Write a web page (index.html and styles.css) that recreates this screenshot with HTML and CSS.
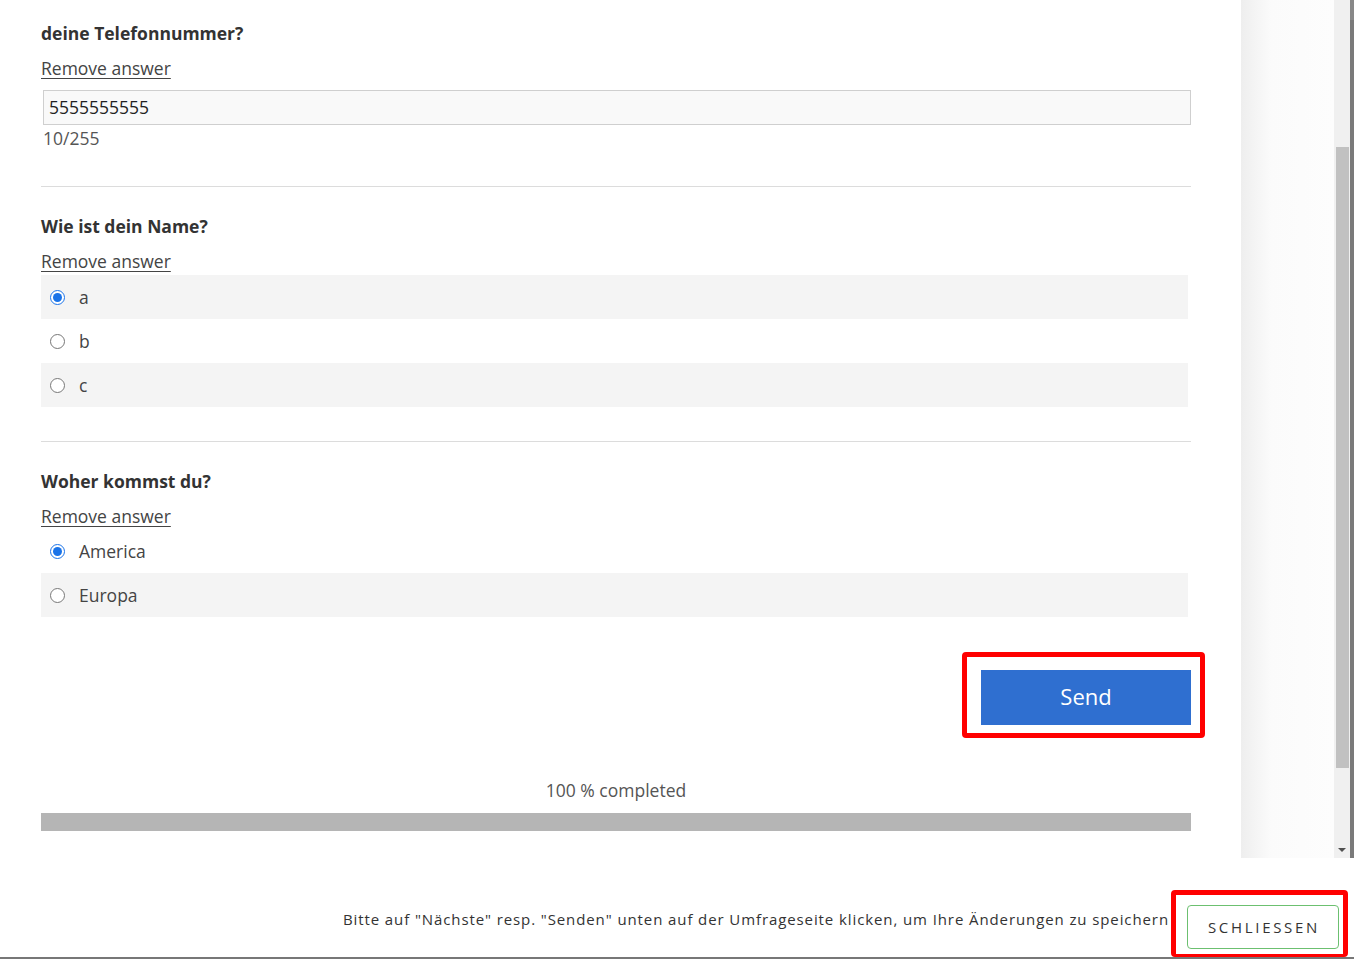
FILE: index.html
```html
<!DOCTYPE html>
<html lang="de">
<head>
<meta charset="utf-8">
<title>Umfrage</title>
<link rel="stylesheet" href="styles.css">
</head>
<body>
<div class="page">
  <div class="frame">
    <main class="content">
      <section class="question first">
        <h2 class="q-title">deine Telefonnummer?</h2>
        <a class="remove" href="#">Remove answer</a>
        <input class="text-input" type="text" value="5555555555">
        <div class="counter">10/255</div>
      </section>

      <section class="question">
        <h2 class="q-title">Wie ist dein Name?</h2>
        <a class="remove" href="#">Remove answer</a>
        <div class="options">
          <label class="option shaded"><input type="radio" name="name" checked><span>a</span></label>
          <label class="option"><input type="radio" name="name"><span>b</span></label>
          <label class="option shaded"><input type="radio" name="name"><span>c</span></label>
        </div>
      </section>

      <section class="question last">
        <h2 class="q-title">Woher kommst du?</h2>
        <a class="remove" href="#">Remove answer</a>
        <div class="options tight">
          <label class="option"><input type="radio" name="land" checked><span>America</span></label>
          <label class="option shaded"><input type="radio" name="land"><span>Europa</span></label>
        </div>
      </section>

      <div class="actions">
        <span class="highlight send-hl"><button class="send" type="button">Send</button></span>
      </div>

      <div class="progress-label">100 % completed</div>
      <div class="progress"></div>
    </main>
    <div class="gutter"></div>
    <div class="scrollbar">
      <div class="track-top"></div>
      <div class="thumb"></div>
      <div class="track-bottom"><span class="arrow"></span></div>
    </div>
    <div class="edge"></div>
  </div>
  <footer class="footer">
    <p class="hint">Bitte auf "Nächste" resp. "Senden" unten auf der Umfrageseite klicken, um Ihre Änderungen zu speichern</p>
    <span class="highlight close-hl"><button class="close" type="button">SCHLIESSEN</button></span>
  </footer>
</div>
</body>
</html>
```

FILE: styles.css
```css
* { box-sizing: border-box; }
html, body { margin: 0; padding: 0; background: #fff; }
body { font-family: "Open Sans", "Liberation Sans", sans-serif; color: #333; overflow: hidden; }

.page { width: 1354px; height: 959px; display: flex; flex-direction: column; }

.frame { height: 858px; display: flex; flex-direction: row; }

.content { width: 1241px; padding: 0 50px 0 41px; display: flex; flex-direction: column; }

.question { padding: 27px 0 34px; border-bottom: 1px solid #dcdcdc; display: flex; flex-direction: column; align-items: flex-start; }
.question.first { padding-top: 21px; padding-bottom: 36px; }
.question.last { border-bottom: none; padding-bottom: 0; }

.q-title { margin: 0; font-size: 17.5px; line-height: 24px; font-weight: 700; color: #333; }

.remove { margin-top: 11px; font-size: 17.5px; line-height: 24px; color: #444; text-decoration: underline; text-underline-offset: 3px; text-decoration-thickness: 1px; }

.text-input { margin: 10px 0 0 2px; width: 1148px; height: 35px; border: 1px solid #cfcfcf; background: #f9f9f9; font: 17.5px/22px "Open Sans", sans-serif; color: #222; padding: 0 5px 2px; outline: none; }

.counter { margin: 1px 0 0 2px; font-size: 17.5px; line-height: 24px; color: #555; }

.options { margin-top: 2px; width: 1147px; display: flex; flex-direction: column; }
.options.tight { margin-top: 1px; }

.option { height: 44px; display: flex; align-items: center; padding-left: 9px; font-size: 17.5px; color: #444; }
.option.shaded { background: #f4f4f4; }
.option input { margin: 0 14px 0 0; width: 15px; height: 15px; accent-color: #1a73e8; }

.actions { margin-top: 35px; display: flex; justify-content: flex-end; margin-right: -14px; }

.highlight { display: inline-flex; border: 5px solid #f00; border-radius: 4px; }
.send-hl { padding: 13px 9px 8px 14px; }

.send { width: 210px; height: 55px; border: none; background: #2f6fd0; color: #fff; font: 22px/1 "Open Sans", sans-serif; padding: 0 0 3px; }

.progress-label { margin-top: 40px; text-align: center; font-size: 17.5px; line-height: 24px; color: #555; }
.progress { margin-top: 11px; height: 18px; background: #b5b5b5; }

.gutter { width: 93px; background: linear-gradient(to right, #eeeeee 0px, #fbfbfb 30px, #fdfdfd 93px); }

.scrollbar { width: 16px; display: flex; flex-direction: column; background: #f0f0f0; }
.track-top { height: 147px; }
.thumb { height: 621px; margin: 0 1px 0 2px; background: #c1c1c1; }
.track-bottom { flex: 1; position: relative; }
.arrow { position: absolute; left: 4px; bottom: 6px; width: 0; height: 0; border-left: 4px solid transparent; border-right: 4px solid transparent; border-top: 4px solid #505050; }

.edge { width: 4px; background: #7a7a7a; border-top: 20px solid #888; }

.footer { flex: 1; display: flex; justify-content: flex-end; align-items: flex-start; padding: 32px 6px 0 0; border-bottom: 2px solid #777; }

.hint { margin: 22px 2px 0 0; font-family: "Open Sans", sans-serif; font-size: 15px; letter-spacing: 0.9px; color: #333; line-height: 14px; white-space: nowrap; }

.close-hl { padding: 10px 4px 5px 11px; border-bottom-width: 3px; }
.close { width: 152px; height: 44px; border: 1px solid #6cc070; border-radius: 4px; background: #fff; font: 15px "Open Sans", sans-serif; letter-spacing: 2.7px; color: #333; padding: 0 0 0 2px; }
```
